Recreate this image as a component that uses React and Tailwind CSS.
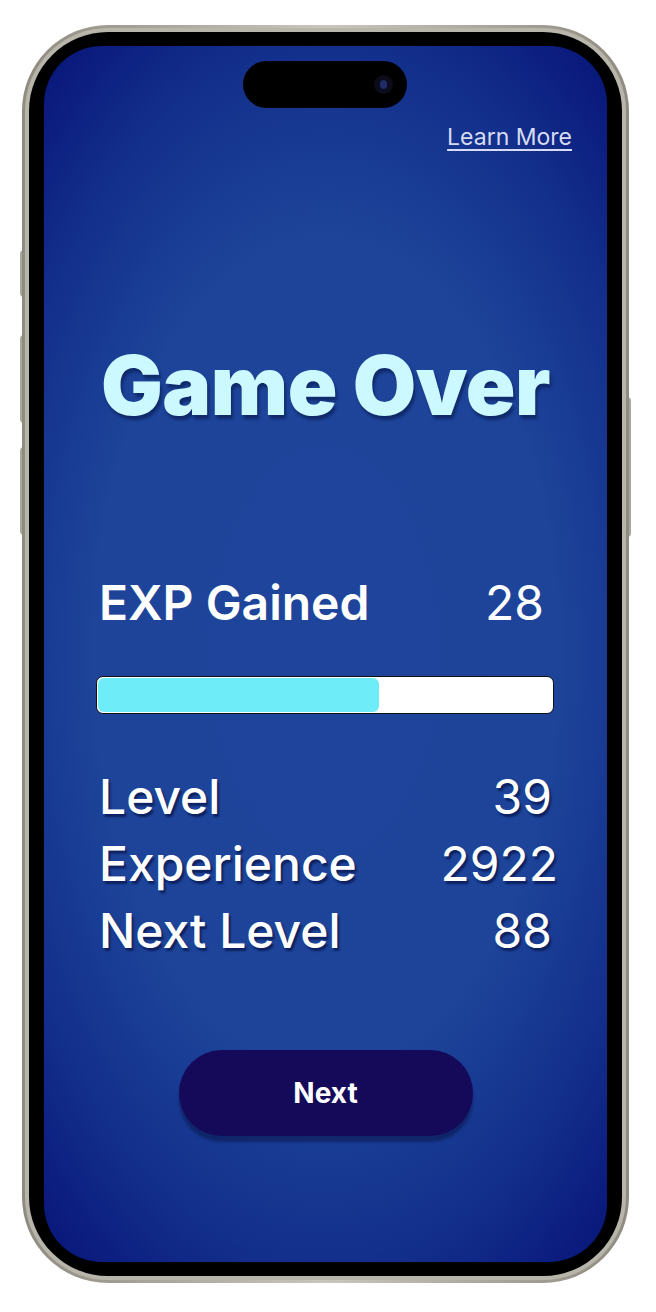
import React from 'react';

const stats = [
  { label: 'Level', value: '39', shift: '' },
  { label: 'Experience', value: '2922', shift: '-mr-[6px]' },
  { label: 'Next Level', value: '88', shift: '' },
];

export default function App() {
  const progress = 62;

  return (
    <div className="w-[656px] h-[1312px] bg-white relative" style={{ fontFamily: 'Inter, "Noto Sans", sans-serif' }}>
      {/* Side buttons */}
      <div className="absolute left-[20px] top-[250px] w-[4px] h-[47px] rounded-l-sm bg-[#a9a69b]" />
      <div className="absolute left-[20px] top-[335px] w-[4px] h-[88px] rounded-l-sm bg-[#a9a69b]" />
      <div className="absolute left-[20px] top-[447px] w-[4px] h-[88px] rounded-l-sm bg-[#a9a69b]" />
      <div className="absolute left-[627px] top-[397px] w-[4px] h-[140px] rounded-r-sm bg-[#a9a69b]" />

      {/* Phone frame */}
      <div className="absolute left-[22px] top-[25px] w-[607px] h-[1258px] rounded-[86px] bg-gradient-to-r from-[#8f8b80] via-[#c9c6bc] to-[#8f8b80] p-[3px]">
        <div className="w-full h-full rounded-[83px] bg-[#b8b5ab] p-[4px]">
          <div className="w-full h-full rounded-[79px] bg-black px-[15px] pt-[14px] pb-[14px]">
            {/* Screen */}
            <div
              className="relative w-full h-full rounded-[58px] overflow-hidden flex flex-col px-[55px]"
              style={{ background: 'radial-gradient(ellipse 75% 62% at 50% 50%, #1e459b 0%, #1d4499 55%, #13308c 80%, #0a197c 100%)' }}
            >
              {/* Dynamic island */}
              <div className="absolute left-[199px] top-[15px] w-[164px] h-[47px] rounded-full bg-black">
                <div className="absolute right-[14px] top-[14px] w-[19px] h-[19px] rounded-full bg-[#0b0b1a] flex items-center justify-center">
                  <div className="w-[7px] h-[9px] rounded-full bg-[#1f2a6b]" />
                </div>
              </div>

              {/* Learn More */}
              <div className="flex justify-end mt-[76px] -mr-[20px]">
                <a className="text-[23px] leading-[30px] text-[#d7dcf2] underline underline-offset-[4px] decoration-[1.5px]">
                  Learn More
                </a>
              </div>

              {/* Title */}
              <h1
                className="mt-[189px] text-center text-[82px] leading-[90px] font-black text-[#ccf9ff] tracking-[-0.5px] -mx-[10px]"
                style={{ textShadow: '2px 4px 3px #102a6a' }}
              >
                Game Over
              </h1>

              {/* EXP gained */}
              <div className="mt-[144px] flex items-center justify-between text-white text-[48px] leading-[56px]">
                <span className="font-semibold">EXP Gained</span>
                <span className="font-normal mr-[8px]">28</span>
              </div>

              {/* Progress */}
              <div className="mt-[45px] -ml-[3px] -mr-[2px] h-[38px] rounded-[7px] border border-[#111] bg-white overflow-hidden p-[1px]">
                <div className="h-full rounded-[6px] bg-[#6eedf9]" style={{ width: `${progress}%` }} />
              </div>

              {/* Stats */}
              <div className="mt-[55px] flex flex-col gap-[11px] text-white text-[48px] leading-[56px] font-medium">
                {stats.map((s) => (
                  <div key={s.label} className="flex items-center justify-between" style={{ textShadow: '2px 3px 2px #0d2160' }}>
                    <span>{s.label}</span>
                    <span className={`font-normal ${s.shift}`}>{s.value}</span>
                  </div>
                ))}
              </div>

              {/* Next button */}
              <div className="mt-[91px] flex justify-center">
                <button className="w-[294px] h-[86px] rounded-full bg-[#150a5a] text-white text-[28px] font-bold shadow-[0_6px_3px_rgba(10,25,80,0.6)]">
                  Next
                </button>
              </div>
            </div>
          </div>
        </div>
      </div>
    </div>
  );
}
